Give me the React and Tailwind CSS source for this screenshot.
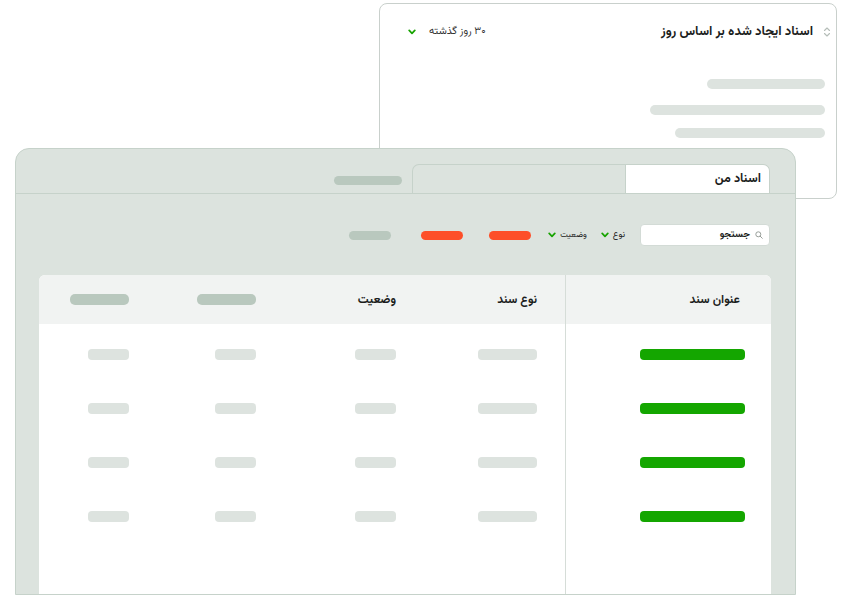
import React from "react";

const Chevron = () => (
  <svg width="8" height="6" viewBox="0 0 8 6" className="shrink-0">
    <path d="M1.2 1.4 L4 4.4 L6.8 1.4" fill="none" stroke="#17a300" strokeWidth="1.7" strokeLinecap="round" strokeLinejoin="round" />
  </svg>
);

const SortIcon = () => (
  <svg width="8" height="12" viewBox="0 0 8 12" className="shrink-0">
    <path d="M1.5 4.5 L4 2 L6.5 4.5 M1.5 7.5 L4 10 L6.5 7.5" fill="none" stroke="#b5bdb8" strokeWidth="1.1" strokeLinecap="round" strokeLinejoin="round" />
  </svg>
);

const SearchIcon = () => (
  <svg width="8" height="8" viewBox="0 0 8 8" className="shrink-0">
    <circle cx="3.3" cy="3.3" r="2.5" fill="none" stroke="#8d948f" strokeWidth="0.9" />
    <path d="M5.2 5.2 L7.3 7.3" stroke="#8d948f" strokeWidth="0.9" strokeLinecap="round" />
  </svg>
);

const rows = [0, 1, 2, 3];

export default function App() {
  return (
    <div dir="rtl" className="relative w-[841px] h-[595px] overflow-hidden bg-white font-['Vazirmatn','DejaVu_Sans',sans-serif] text-[#1b1d1c]">
      {/* Back card */}
      <div className="absolute left-[379px] top-[3px] w-[458px] h-[196px] rounded-[8px] border border-[#c9d0cc] bg-white flex flex-col">
        <div className="mt-[18px] h-[20px] flex items-center justify-between pr-[5px] pl-[28px]">
          <div className="flex items-center gap-[10px]">
            <SortIcon />
            <span className="text-[13px] font-bold leading-none">اسناد ایجاد شده بر اساس روز</span>
          </div>
          <div className="flex items-center gap-[13px]">
            <span className="text-[10.5px] text-[#333] leading-none">۳۰ روز گذشته</span>
            <Chevron />
          </div>
        </div>
        <div className="flex flex-col items-start pr-[11px] mt-[37px]">
          <div className="w-[118px] h-[10px] rounded-full bg-[#dde3df]" />
          <div className="w-[175px] h-[10px] rounded-full bg-[#dde3df] mt-[16px]" />
          <div className="w-[150px] h-[10px] rounded-full bg-[#dde3df] mt-[13px]" />
        </div>
      </div>

      {/* Main panel */}
      <div className="absolute left-[15px] top-[148px] w-[781px] h-[447px] rounded-t-[14px] border border-[#c6d2ca] bg-[#dce3de] flex flex-col">
        <div className="h-[45px] shrink-0 border-b border-[#c6d2ca] flex items-end pr-[25px]">
          <div className="h-[29px] flex border-t border-x border-[#c6d2ca] rounded-t-[7px] overflow-hidden">
            <div className="w-[143px] bg-white flex items-center pr-[8px]">
              <span className="text-[12.5px] font-bold leading-none">اسناد من</span>
            </div>
            <div className="w-[213px] border-r border-[#c6d2ca]" />
          </div>
          <div className="mr-[10px] mb-[8px] w-[68px] h-[9px] rounded-full bg-[#b9c8be]" />
        </div>

        <div className="mt-[30px] h-[22px] shrink-0 flex items-center pr-[25px]">
          <div className="w-[130px] h-[22px] bg-white rounded-[4px] border border-[#d3dbd6] flex items-center pr-[6px] gap-[5px]">
            <SearchIcon />
            <span className="text-[10px] font-bold leading-none">جستجو</span>
          </div>
          <div className="mr-[15px] flex items-center gap-[4px]">
            <span className="text-[9px] leading-none text-[#222]">نوع</span>
            <Chevron />
          </div>
          <div className="mr-[14px] flex items-center gap-[4px]">
            <span className="text-[8.5px] leading-none text-[#222] whitespace-nowrap">وضعیت</span>
            <Chevron />
          </div>
          <div className="mr-[17px] w-[42px] h-[9px] rounded-full bg-[#fd4f29]" />
          <div className="mr-[26px] w-[42px] h-[9px] rounded-full bg-[#fd4f29]" />
          <div className="mr-[30px] w-[42px] h-[9px] rounded-full bg-[#b9c8be]" />
        </div>

        <div className="mt-[29px] mr-[24px] w-[732px] flex-1 bg-white rounded-t-[6px] flex overflow-hidden">
          {/* first column */}
          <div className="w-[206px] shrink-0 border-l border-[#d6ddd8] flex flex-col">
            <div className="h-[49px] bg-[#f1f3f2] flex items-center pr-[31px]">
              <span className="text-[12px] font-bold leading-none">عنوان سند</span>
            </div>
            <div className="pt-[3px] flex flex-col">
              {rows.map((r) => (
                <div key={r} className="h-[54px] flex items-center pr-[26px]">
                  <div className="w-[105px] h-[11px] rounded-[4px] bg-[#14a600]" />
                </div>
              ))}
            </div>
          </div>
          {/* rest */}
          <div className="flex-1 flex flex-col">
            <div className="h-[49px] bg-[#f1f3f2] flex items-center">
              <div className="w-[169px] pr-[28px] flex">
                <span className="text-[12px] font-bold leading-none">نوع سند</span>
              </div>
              <div className="w-[140px] flex">
                <span className="text-[12px] font-bold leading-none">وضعیت</span>
              </div>
              <div className="w-[127px] flex">
                <div className="w-[59px] h-[11px] rounded-[5px] bg-[#b9c8be]" />
              </div>
              <div className="w-[90px] flex">
                <div className="w-[59px] h-[11px] rounded-[5px] bg-[#b9c8be]" />
              </div>
            </div>
            <div className="pt-[3px] flex flex-col">
              {rows.map((r) => (
                <div key={r} className="h-[54px] flex items-center">
                  <div className="w-[169px] pr-[28px] flex">
                    <div className="w-[59px] h-[11px] rounded-[4px] bg-[#dde3df]" />
                  </div>
                  <div className="w-[140px] flex">
                    <div className="w-[41px] h-[11px] rounded-[4px] bg-[#dde3df]" />
                  </div>
                  <div className="w-[127px] flex">
                    <div className="w-[41px] h-[11px] rounded-[4px] bg-[#dde3df]" />
                  </div>
                  <div className="w-[90px] flex">
                    <div className="w-[41px] h-[11px] rounded-[4px] bg-[#dde3df]" />
                  </div>
                </div>
              ))}
            </div>
          </div>
        </div>
      </div>
    </div>
  );
}
